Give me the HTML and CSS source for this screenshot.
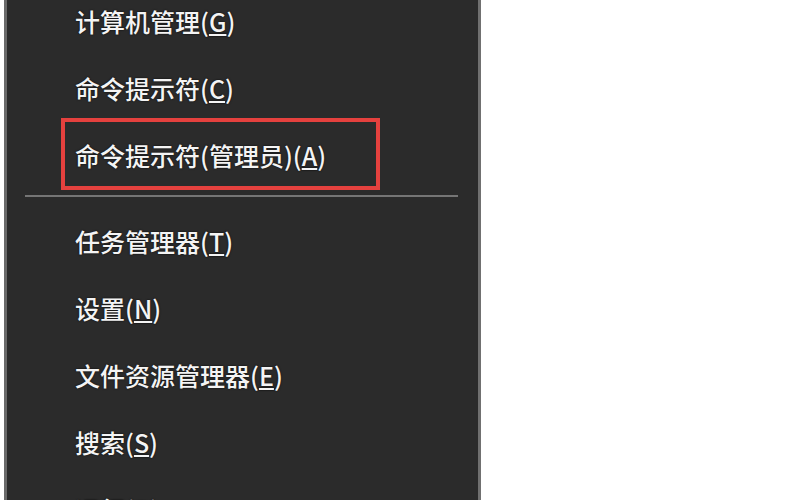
FILE: index.html
```html
<!DOCTYPE html>
<html lang="zh-CN">
<head>
<meta charset="utf-8">
<title>Win+X 菜单</title>
<link rel="stylesheet" href="styles.css">
</head>
<body>
<div class="menu">
  <div class="group">
    <div class="item">计算机管理(<u>G</u>)</div>
    <div class="item">命令提示符(<u>C</u>)</div>
    <div class="item marked">命令提示符(管理员)(<u>A</u>)</div>
  </div>
  <div class="sep"></div>
  <div class="group">
    <div class="item">任务管理器(<u>T</u>)</div>
    <div class="item">设置(<u>N</u>)</div>
    <div class="item">文件资源管理器(<u>E</u>)</div>
    <div class="item">搜索(<u>S</u>)</div>
    <div class="item">运行(<u>R</u>)</div>
  </div>
</div>
</body>
</html>
```

FILE: styles.css
```css
html, body {
  margin: 0;
  padding: 0;
  background: #ffffff;
  height: 100%;
  overflow: hidden;
}

.menu {
  margin-left: 4px;
  margin-top: -13px;
  width: 471px;
  min-height: 560px;
  background: #2b2b2b;
  border-left: 3px solid #6a6a6a;
  border-right: 3px solid #707070;
  font-family: "Noto Sans CJK SC", "Noto Sans", sans-serif;
  font-size: 25px;
  font-weight: 500;
  color: #f4f4f4;
}

.item {
  height: 67px;
  display: flex;
  align-items: center;
  padding-left: 68px;
  text-shadow: 0 0 2px rgba(0, 0, 0, 0.9);
}

.item u {
  text-decoration-thickness: 2px;
  text-underline-offset: 2px;
}

.marked {
  position: relative;
}

.marked::after {
  content: "";
  position: absolute;
  left: 54px;
  top: -3px;
  width: 319px;
  height: 72px;
  box-sizing: border-box;
  border: 4px solid #e5413e;
}

.sep {
  height: 2px;
  margin: 7px 20px 10px 18px;
  background: #757575;
}
```
